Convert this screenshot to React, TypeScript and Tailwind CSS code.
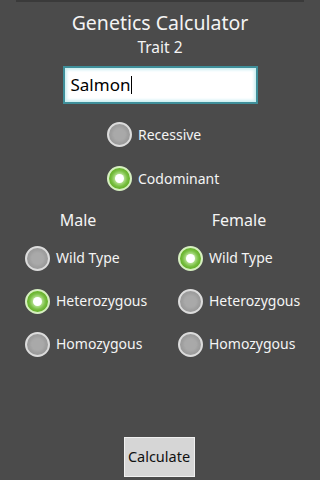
import React from "react";

function Radio({ checked, label }: { checked?: boolean; label: string }) {
  return (
    <div className="flex items-center gap-[6px]">
      {checked ? (
        <div className="flex h-[25px] w-[25px] items-center justify-center rounded-full border-[2px] border-[#d6efc0] bg-[#66b32a]">
          <div className="h-[9px] w-[9px] rounded-full bg-white shadow-[0_0_4px_2px_rgba(230,255,210,0.8)]" />
        </div>
      ) : (
        <div className="flex h-[25px] w-[25px] items-center justify-center rounded-full border-[2px] border-[#dcdcdc] bg-[#9c9c9c]">
          <div className="h-[11px] w-[11px] rounded-full bg-[#a9a9a9] shadow-[0_0_3px_2px_rgba(180,180,180,0.6)]" />
        </div>
      )}
      <span className="text-[14px] leading-[20px] text-[#f4f4f4]">{label}</span>
    </div>
  );
}

export default function App() {
  return (
    <div className="flex min-h-[480px] flex-col bg-[#4b4b4b] font-['Noto_Sans',sans-serif] text-[#f4f4f4]">
      <div className="mx-[16px] h-[2px] bg-[#3a3a3a]" />
      <h1 className="mt-[9px] text-center text-[19.5px] leading-[24px]">Genetics Calculator</h1>
      <p className="text-center text-[15.5px] leading-[24px]">Trait 2</p>

      <div className="mx-auto mt-[7px] flex h-[38px] w-[195px] items-center border-[2px] border-[#3f8f9a] bg-white px-[6px] shadow-[inset_0_0_3px_2px_#cdeff2]">
        <span className="text-[17px] leading-[22px] text-black">Salmon</span>
        <span className="ml-[1px] h-[18px] w-[1px] bg-black" />
      </div>

      <div className="ml-[107px] mt-[18px] flex flex-col gap-[19px]">
        <Radio label="Recessive" />
        <Radio checked label="Codominant" />
      </div>

      <div className="mt-[18px] grid grid-cols-2">
        <div className="flex flex-col">
          <p className="ml-[40px] w-[76px] text-center text-[16px] leading-[22px]">Male</p>
          <div className="ml-[25px] mt-[14.5px] flex flex-col gap-[18px]">
            <Radio label="Wild Type" />
            <Radio checked label="Heterozygous" />
            <Radio label="Homozygous" />
          </div>
        </div>
        <div className="flex flex-col">
          <p className="ml-[41px] w-[76px] text-center text-[16px] leading-[22px]">Female</p>
          <div className="ml-[18px] mt-[14.5px] flex flex-col gap-[18px]">
            <Radio checked label="Wild Type" />
            <Radio label="Heterozygous" />
            <Radio label="Homozygous" />
          </div>
        </div>
      </div>

      <div className="mt-auto flex justify-center pb-[3px]">
        <button className="ml-[-2px] h-[40px] w-[71px] border border-[#f0f0f0] bg-[#d6d6d6] text-[14.5px] text-[#111]">
          Calculate
        </button>
      </div>
    </div>
  );
}
